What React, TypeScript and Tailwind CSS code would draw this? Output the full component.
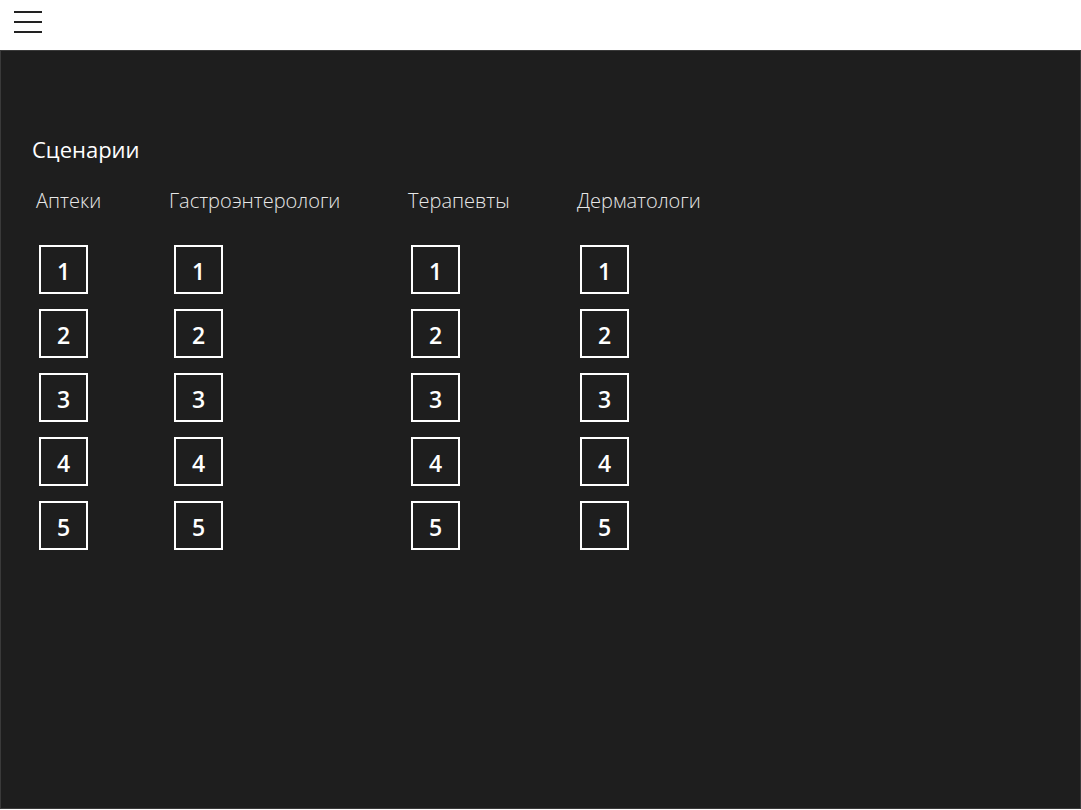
const GROUPS = [
  { title: "Аптеки", width: "w-[133px]", offset: "ml-[3px]" },
  { title: "Гастроэнтерологи", width: "w-[239px]", offset: "ml-[5px]" },
  { title: "Терапевты", width: "w-[169px]", offset: "ml-[3px]" },
  { title: "Дерматологи", width: "w-[169px]", offset: "ml-[3px]" },
];

const STEPS = [1, 2, 3, 4, 5];

export default function App() {
  return (
    <div
      className="w-[1081px] h-[810px] bg-white flex flex-col overflow-hidden"
      style={{ fontFamily: '"Open Sans", "Noto Sans", sans-serif' }}
    >
      {/* Top bar */}
      <div className="h-[50px] shrink-0 flex items-start pl-[14px] pt-[11px]">
        <button className="flex flex-col gap-[8px]">
          <span className="block w-[28px] h-[2px] bg-[#222]" />
          <span className="block w-[28px] h-[2px] bg-[#222]" />
          <span className="block w-[28px] h-[2px] bg-[#222]" />
        </button>
      </div>

      {/* Content */}
      <div className="flex-1 mb-[1px] bg-[#1e1e1e] border border-[#3a3a3a] text-white pl-[31px] pt-[83px]">
        <h1 className="text-[22px] font-normal leading-[30px] mb-[23px]">Сценарии</h1>
        <div className="flex pl-[4px]">
          {GROUPS.map((g) => (
            <div key={g.title} className={`${g.width} shrink-0 flex flex-col`}>
              <h2 className="text-[20px] font-light leading-[28px] text-[#e8e8e8] whitespace-nowrap">
                {g.title}
              </h2>
              <div className={`${g.offset} mt-[30px] flex flex-col gap-[15px]`}>
                {STEPS.map((n) => (
                  <button
                    key={n}
                    className="w-[49px] h-[49px] border-2 border-white flex items-center justify-center pt-[3px] text-[23px] font-semibold leading-none"
                  >
                    {n}
                  </button>
                ))}
              </div>
            </div>
          ))}
        </div>
      </div>
    </div>
  );
}
